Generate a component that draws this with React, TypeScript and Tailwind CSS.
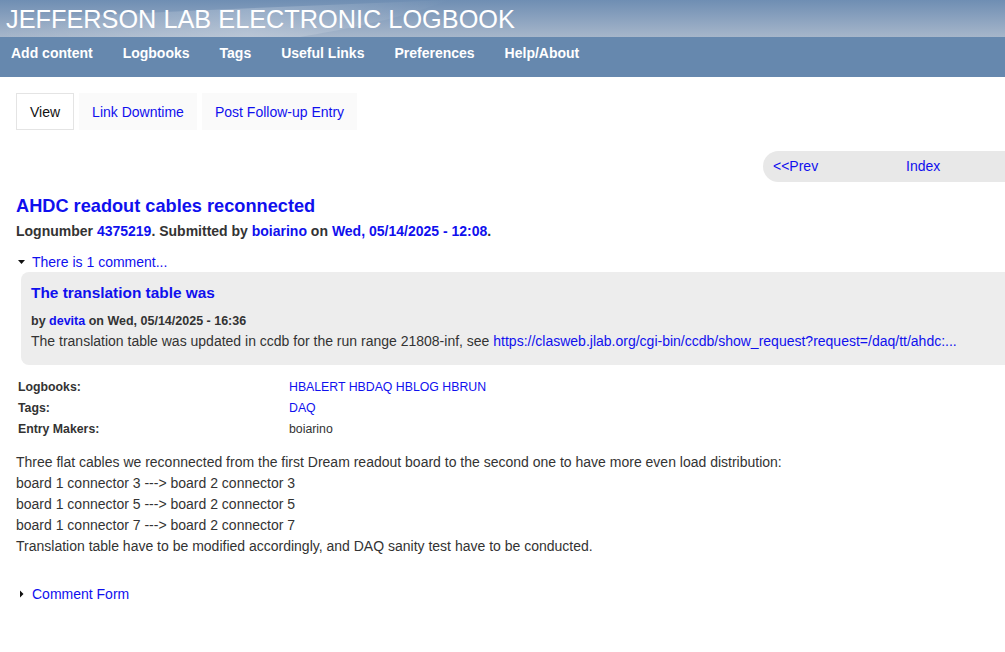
export default function App() {
  const navItems = ["Add content", "Logbooks", "Tags", "Useful Links", "Preferences", "Help/About"];
  const link = "text-[#1010ee]";

  return (
    <div className="min-h-[652px] bg-white font-['Liberation_Sans',Arial,sans-serif] text-[#333]">
      <header>
        <div className="relative h-[37px] overflow-hidden bg-gradient-to-b from-[#6f8eb3] to-[#a6b6ca]">
          <svg className="absolute left-0 top-0" width="1005" height="37" viewBox="0 0 1005 37" aria-hidden>
            <defs>
              <linearGradient id="sw" x1="0" x2="1" y1="0" y2="0">
                <stop offset="0" stopColor="#ffffff" stopOpacity="0" />
                <stop offset="0.55" stopColor="#ffffff" stopOpacity="0.22" />
                <stop offset="1" stopColor="#ffffff" stopOpacity="0" />
              </linearGradient>
            </defs>
            <path d="M0 37 L0 20 C150 12 300 6 450 0 C420 10 390 22 300 37 Z" fill="url(#sw)" />
          </svg>
          <h1 className="relative pl-[6px] pt-[4px] text-[25.3px] leading-[30px] text-white">
            JEFFERSON LAB ELECTRONIC LOGBOOK
          </h1>
        </div>
        <nav className="flex h-[40px] items-center gap-[30px] bg-[#6688ae] pb-[8px] pl-[11px]">
          {navItems.map((n) => (
            <span key={n} className="text-[14px] font-bold text-white">
              {n}
            </span>
          ))}
        </nav>
      </header>

      <div className="flex items-start gap-[5px] pl-[16px] pt-[16px]">
        <span className="flex h-[37px] items-center border border-[#e4e4e4] bg-white px-[13px] pt-[1px] text-[14px] text-[#111]">
          View
        </span>
        <span className={`flex h-[37px] items-center bg-[#fafafa] px-[13px] pt-[1px] text-[14px] ${link}`}>
          Link Downtime
        </span>
        <span className={`flex h-[37px] items-center bg-[#fafafa] px-[13px] pt-[1px] text-[14px] ${link}`}>
          Post Follow-up Entry
        </span>
      </div>

      <div className="mt-[21px] flex justify-end">
        <div className={`flex h-[31px] w-[242px] items-center rounded-l-full bg-[#e8e8e8] pl-[10px] text-[14px] ${link}`}>
          <span className="w-[133px]">&lt;&lt;Prev</span>
          <span>Index</span>
        </div>
      </div>

      <div className="pl-[16px]">
        <h2 className={`mt-[13px] text-[18.2px] font-bold leading-[22px] ${link}`}>AHDC readout cables reconnected</h2>
        <p className="mt-[5px] text-[14px] font-bold leading-[18px]">
          Lognumber <span className={link}>4375219</span>. Submitted by <span className={link}>boiarino</span> on{" "}
          <span className={link}>Wed, 05/14/2025 - 12:08</span>.
        </p>

        <div className="mt-[13px] flex items-center text-[14px] leading-[18px]">
          <svg width="15" height="10" viewBox="0 0 15 10" className="ml-[1px]" aria-hidden>
            <path d="M1 3 L8 3 L4.5 7 Z" fill="#111" />
          </svg>
          <span className={link}>There is 1 comment...</span>
        </div>

        <div className="mt-[1px] ml-[5px] rounded-l-[8px] bg-[#ededed] pb-[14px] pl-[10px] pt-[11px]">
          <h3 className={`text-[15.4px] font-bold leading-[20px] ${link}`}>The translation table was</h3>
          <p className="mt-[10px] text-[12.5px] font-bold leading-[16px]">
            by <span className={link}>devita</span> on Wed, 05/14/2025 - 16:36
          </p>
          <p className="mt-[2px] text-[14px] leading-[20px]">
            The translation table was updated in ccdb for the run range 21808-inf, see{" "}
            <span className={link}>https://clasweb.jlab.org/cgi-bin/ccdb/show_request?request=/daq/tt/ahdc:...</span>
          </p>
        </div>

        <div className="mt-[12px] grid grid-cols-[271px_1fr] pl-[2px] text-[12.3px] leading-[21px]">
          <span className="font-bold">Logbooks:</span>
          <span className={link}>HBALERT HBDAQ HBLOG HBRUN</span>
          <span className="font-bold">Tags:</span>
          <span className={link}>DAQ</span>
          <span className="font-bold">Entry Makers:</span>
          <span>boiarino</span>
        </div>

        <div className="mt-[12px] text-[14px] leading-[21px]">
          <p>Three flat cables we reconnected from the first Dream readout board to the second one to have more even load distribution:</p>
          <p>board 1 connector 3 ---&gt; board 2 connector 3</p>
          <p>board 1 connector 5 ---&gt; board 2 connector 5</p>
          <p>board 1 connector 7 ---&gt; board 2 connector 7</p>
          <p>Translation table have to be modified accordingly, and DAQ sanity test have to be conducted.</p>
        </div>

        <div className="mt-[28px] flex items-center text-[14px] leading-[18px]">
          <svg width="15" height="10" viewBox="0 0 15 10" className="ml-[1px]" aria-hidden>
            <path d="M3 1.5 L6.5 5 L3 8.5 Z" fill="#111" />
          </svg>
          <span className={link}>Comment Form</span>
        </div>
      </div>
    </div>
  );
}
